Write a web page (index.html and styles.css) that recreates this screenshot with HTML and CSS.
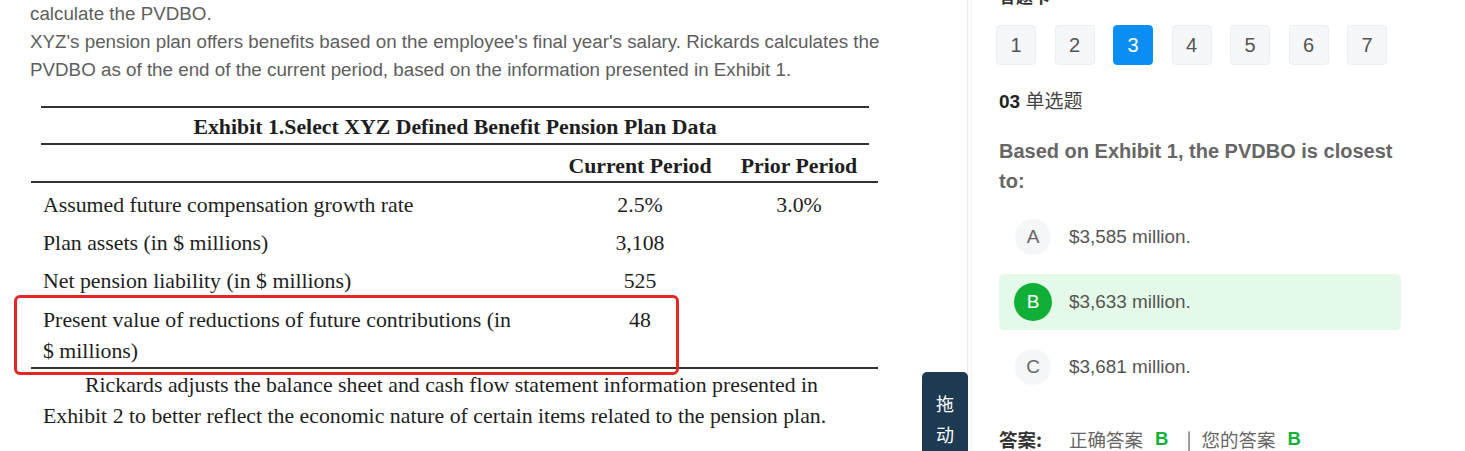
FILE: index.html
```html
<!DOCTYPE html>
<html lang="zh-CN">
<head>
<meta charset="utf-8">
<title>PVDBO question</title>
<link rel="stylesheet" href="styles.css">
</head>
<body>
<div class="page">
  <main class="left">
    <p class="intro">calculate the PVDBO.<br>XYZ's pension plan offers benefits based on the employee's final year's salary. Rickards calculates the<br>PVDBO as of the end of the current period, based on the information presented in Exhibit 1.</p>
    <div class="exhibit">
      <div class="ex-title">Exhibit 1.Select XYZ Defined Benefit Pension Plan Data</div>
      <div class="ex-row ex-head">
        <div class="c-label"></div>
        <div class="c-cur">Current Period</div>
        <div class="c-pri">Prior Period</div>
      </div>
      <div class="ex-body">
        <div class="ex-row">
          <div class="c-label">Assumed future compensation growth rate</div>
          <div class="c-cur">2.5%</div>
          <div class="c-pri">3.0%</div>
        </div>
        <div class="ex-row">
          <div class="c-label">Plan assets (in $ millions)</div>
          <div class="c-cur">3,108</div>
          <div class="c-pri"></div>
        </div>
        <div class="ex-row">
          <div class="c-label">Net pension liability (in $ millions)</div>
          <div class="c-cur">525</div>
          <div class="c-pri"></div>
        </div>
        <div class="ex-row ex-row-two">
          <div class="c-label">Present value of reductions of future contributions (in<br>$ millions)</div>
          <div class="c-cur">48</div>
          <div class="c-pri"></div>
        </div>
      </div>
      <div class="highlight"></div>
    </div>
    <p class="after">Rickards adjusts the balance sheet and cash flow statement information presented in<br>Exhibit 2 to better reflect the economic nature of certain items related to the pension plan.</p>
    <div class="drag">拖<br>动</div>
  </main>
  <aside class="right">
    <div class="card-title">答题卡</div>
    <div class="nums">
      <span class="num">1</span>
      <span class="num">2</span>
      <span class="num active">3</span>
      <span class="num">4</span>
      <span class="num">5</span>
      <span class="num">6</span>
      <span class="num">7</span>
    </div>
    <div class="qtype"><b>03</b> 单选题</div>
    <div class="question">Based on Exhibit 1, the PVDBO is closest<br>to:</div>
    <div class="options">
      <div class="opt"><span class="letter">A</span><span class="otext">$3,585 million.</span></div>
      <div class="opt correct"><span class="letter">B</span><span class="otext">$3,633 million.</span></div>
      <div class="opt"><span class="letter">C</span><span class="otext">$3,681 million.</span></div>
    </div>
    <div class="answer">
      <span class="a-label">答案:</span>
      <span class="a-item">正确答案</span><span class="a-val">B</span>
      <span class="a-sep">|</span>
      <span class="a-item">您的答案</span><span class="a-val">B</span>
    </div>
  </aside>
</div>
</body>
</html>
```

FILE: styles.css
```css
html, body {
  margin: 0;
  padding: 0;
  background: #ffffff;
}
body {
  width: 1465px;
  height: 451px;
  overflow: hidden;
  font-family: "Liberation Sans", Arial, "Noto Sans CJK SC", sans-serif;
}
.page {
  display: flex;
  height: 451px;
}
.left {
  position: relative;
  width: 968px;
  height: 451px;
  border-right: 1px solid #ececec;
  box-sizing: border-box;
  padding-left: 30px;
}
.intro {
  margin: 0;
  font-size: 18.8px;
  line-height: 28px;
  color: #5e5e5e;
}
.exhibit {
  position: relative;
  margin-top: 22px;
  margin-left: 1px;
  width: 847px;
  font-family: "Liberation Serif", "Times New Roman", serif;
  color: #1e1e1e;
  font-size: 21.8px;
}
.ex-title {
  margin: 0 9px 0 10px;
  border-top: 2px solid #333;
  border-bottom: 2px solid #333;
  height: 35px;
  line-height: 38px;
  text-align: center;
  font-weight: bold;
}
.ex-row {
  display: flex;
  line-height: 38px;
}
.ex-head {
  font-weight: bold;
  border-bottom: 2px solid #333;
  height: 36px;
  line-height: 42px;
}
.ex-body {
  padding-top: 3px;
  border-bottom: 2px solid #333;
}
.c-label {
  width: 517px;
  padding-left: 12px;
  white-space: nowrap;
}
.c-cur {
  width: 160px;
  text-align: center;
}
.c-pri {
  width: 158px;
  text-align: center;
}
.ex-row-two {
  line-height: 31px;
  padding: 5px 0 0;
}
.highlight {
  position: absolute;
  left: -17px;
  top: 189px;
  width: 659px;
  height: 74px;
  border: 3px solid #e32626;
  border-radius: 6px;
}
.after {
  margin: 1px 0 0;
  padding-left: 13px;
  font-family: "Liberation Serif", "Times New Roman", serif;
  font-size: 21.8px;
  line-height: 31px;
  color: #1e1e1e;
  text-indent: 42px;
  white-space: nowrap;
}
.drag {
  position: absolute;
  left: 922px;
  top: 372px;
  width: 46px;
  height: 79px;
  background: #1c3a52;
  border-radius: 5px 5px 0 0;
  color: #ffffff;
  font-family: "Noto Sans CJK SC", sans-serif;
  font-size: 18px;
  line-height: 31px;
  text-align: center;
  padding-top: 16px;
  box-sizing: border-box;
}
.right {
  flex: 1;
  margin-left: 3px;
  border-left: 1px solid #f2f2f2;
  padding-left: 24px;
  font-family: "Liberation Sans", Arial, "Noto Sans CJK SC", sans-serif;
}
.card-title {
  margin-top: -14px;
  height: 20px;
  font-size: 17px;
  line-height: 20px;
  font-weight: bold;
  color: #333;
  padding-left: 3px;
  font-family: "Noto Sans CJK SC", sans-serif;
}
.nums {
  display: flex;
  gap: 18.5px;
  margin-top: 19px;
}
.num {
  width: 40px;
  height: 40px;
  box-sizing: border-box;
  border: 1px solid #eceef2;
  background: #f5f7fa;
  border-radius: 4px;
  display: flex;
  align-items: center;
  justify-content: center;
  font-size: 20px;
  color: #555;
}
.num.active {
  background: #0b8ef3;
  border-color: #0b8ef3;
  color: #ffffff;
}
.qtype {
  margin-top: 25px;
  padding-left: 3px;
  font-size: 19px;
  line-height: 24px;
  color: #444;
  font-family: "Liberation Sans", Arial, "Noto Sans CJK SC", sans-serif;
}
.qtype b {
  color: #222;
}
.question {
  margin-top: 22px;
  padding-left: 3px;
  font-size: 20px;
  line-height: 30px;
  font-weight: bold;
  color: #666;
}
.options {
  margin-top: 13px;
  margin-left: 3px;
  width: 402px;
  display: flex;
  flex-direction: column;
  gap: 9px;
}
.opt {
  height: 56px;
  display: flex;
  align-items: center;
  padding-left: 16px;
  border-radius: 5px;
}
.opt.correct {
  background: #e4f9e7;
}
.letter {
  width: 36px;
  height: 36px;
  border-radius: 50%;
  background: #f5f6f8;
  display: flex;
  align-items: center;
  justify-content: center;
  font-size: 19px;
  color: #666;
}
.opt.correct .letter {
  width: 38px;
  height: 38px;
  margin-left: -1px;
  margin-right: -1px;
  background: #12af38;
  color: #ffffff;
}
.otext {
  margin-left: 18px;
  font-size: 18.9px;
  color: #555;
}
.answer {
  margin-top: 32px;
  padding-left: 3px;
  display: flex;
  align-items: center;
  font-size: 18.5px;
  line-height: 24px;
  color: #666;
  font-family: "Noto Sans CJK SC", sans-serif;
}
.a-label {
  font-weight: bold;
  color: #333;
  width: 70px;
}
.a-val {
  color: #13b13a;
  font-weight: bold;
  font-family: "Liberation Sans", Arial, sans-serif;
  margin-left: 12px;
}
.a-sep {
  margin: 0 10px 0 18px;
  color: #666;
}
```
